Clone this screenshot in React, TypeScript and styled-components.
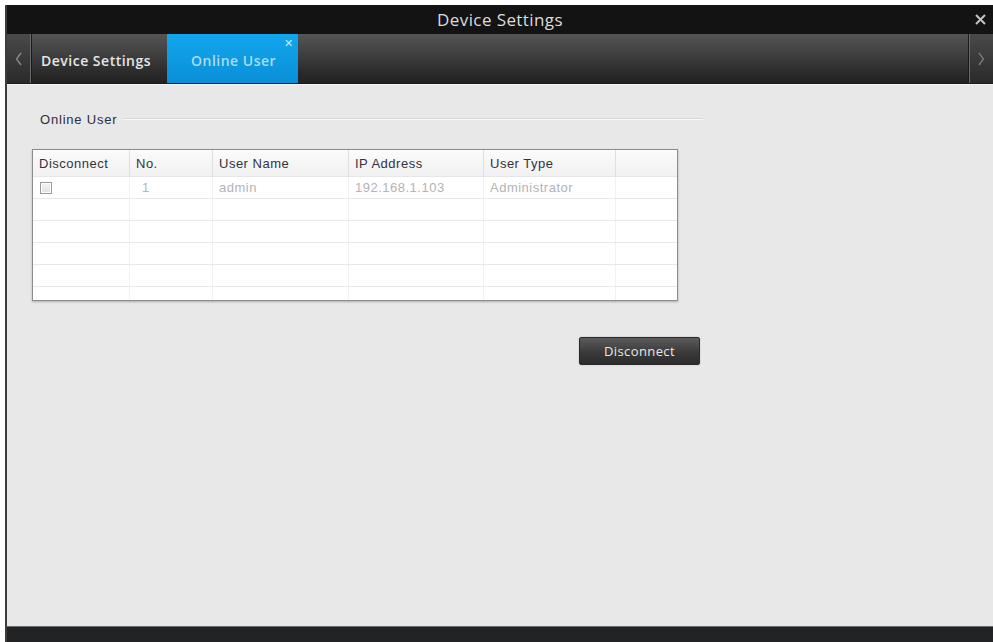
import React from "react";
import styled, { createGlobalStyle } from "styled-components";

const Global = createGlobalStyle`
  html, body { margin: 0; padding: 0; background: #ffffff; }
  body { font-family: "Open Sans", "Liberation Sans", sans-serif; }
  * { box-sizing: border-box; }
`;

const Page = styled.div`
  width: 993px;
  height: 642px;
  padding: 5px 0 0 5px;
  overflow: hidden;
`;

const Window = styled.div`
  height: 637px;
  display: flex;
  flex-direction: column;
  border-left: 2px solid #3c3c3c;
  background: #e8e8e8;
`;

const TitleBar = styled.div`
  height: 29px;
  flex: none;
  background: #131313;
  display: grid;
  grid-template-columns: 1fr auto 1fr;
  align-items: center;
`;

const Title = styled.div`
  grid-column: 2;
  color: #dcdcdc;
  font-size: 17px;
  letter-spacing: 0.4px;
`;

const CloseBtn = styled.div`
  grid-column: 3;
  justify-self: end;
  width: 26px;
  display: flex;
  justify-content: center;
  align-items: center;
  height: 29px;
`;

const TabBar = styled.div`
  height: 50px;
  flex: none;
  display: flex;
  background: linear-gradient(#555555 0%, #404040 40%, #2a2a2a 80%, #222222 100%);
  border-bottom: 1px solid #1a1a1a;
`;

const ArrowCell = styled.div<{ $side: "left" | "right" }>`
  width: 24px;
  flex: none;
  display: flex;
  align-items: center;
  justify-content: center;
  background: linear-gradient(#4a4a4a, #2a2a2a);
  ${(p) =>
    p.$side === "left"
      ? "border-right: 1px solid #6a6a6a; box-shadow: 1px 0 0 #1a1a1a;"
      : "border-left: 1px solid #6a6a6a; box-shadow: -1px 0 0 #1a1a1a;"}
`;

const Tabs = styled.div`
  flex: 1;
  display: flex;
`;

const Tab = styled.div<{ $active?: boolean }>`
  position: relative;
  display: flex;
  align-items: center;
  padding: 4px 0 0 ${(p) => (p.$active ? "24px" : "10px")};
  width: ${(p) => (p.$active ? "131px" : "136px")};
  font-size: 14px;
  font-weight: 600;
  letter-spacing: 0.5px;
  white-space: nowrap;
  color: ${(p) => (p.$active ? "#a9dcf7" : "#e6e6e6")};
  background: ${(p) =>
    p.$active ? "linear-gradient(#12a6ec, #0a8fd8)" : "transparent"};
`;

const TabClose = styled.span`
  position: absolute;
  top: 3px;
  right: 5px;
  font-size: 11px;
  line-height: 1;
  letter-spacing: 0;
  color: #c8ecff;
  font-weight: 400;
`;

const Content = styled.div`
  flex: 1;
  padding: 26px 0 0 25px;
  display: flex;
  flex-direction: column;
  border-top: 1px solid #f5f5f5;
`;

const Group = styled.div`
  width: 671px;
  display: flex;
  flex-direction: column;
`;

const GroupHead = styled.div`
  display: flex;
  align-items: center;
  gap: 6px;
  height: 16px;
  padding-left: 8px;
`;

const GroupLabel = styled.span`
  font-family: "Liberation Sans", Arial, sans-serif;
  font-size: 13px;
  color: #2f2f3a;
  letter-spacing: 0.8px;
`;

const GroupLine = styled.div`
  flex: 1;
  height: 2px;
  border-top: 1px solid #d6d6d6;
  border-bottom: 1px solid #fbfbfb;
`;

const TableBox = styled.div`
  margin-top: 22px;
  width: 646px;
  border: 1px solid #8c8c8c;
  box-shadow: 0 1px 2px rgba(0, 0, 0, 0.25);
  background: #ffffff;
`;

const Row = styled.div<{ $head?: boolean }>`
  display: grid;
  grid-template-columns: 97px 83px 136px 135px 132px 1fr;
  height: ${(p) => (p.$head ? "27px" : "22px")};
  background: ${(p) => (p.$head ? "linear-gradient(#fbfbfb, #f1f1f1)" : "#ffffff")};
  border-bottom: 1px solid ${(p) => (p.$head ? "#e6e6e6" : "#e8e8e8")};
`;

const Body = styled.div`
  height: 123px;
  overflow: hidden;
`;

const Cell = styled.div<{ $head?: boolean }>`
  display: flex;
  align-items: center;
  padding-left: 6px;
  font-family: "Liberation Sans", Arial, sans-serif;
  font-size: 13px;
  letter-spacing: ${(p) => (p.$head ? "0.5px" : "0.5px")};
  color: ${(p) => (p.$head ? "#33323f" : "#b4b4b4")};
  border-right: 1px solid ${(p) => (p.$head ? "#dedede" : "#f2f2f2")};
  white-space: nowrap;
  overflow: hidden;
  &:last-child { border-right: none; }
`;

const NoCell = styled(Cell)`
  padding-left: 12px;
`;

const Check = styled.span`
  width: 12px;
  height: 12px;
  margin-left: 1px;
  border: 1px solid #9a9a9a;
  background: linear-gradient(#f4f4f4, #e2e2e2);
  box-shadow: inset 0 0 0 1px #ffffff;
`;

const Actions = styled.div`
  display: flex;
  justify-content: flex-end;
  padding: 36px 3px 0 0;
`;

const Button = styled.button`
  width: 121px;
  height: 28px;
  border: 1px solid #2a2a2a;
  border-radius: 2px;
  background: linear-gradient(#5c5c5c, #3a3a3a 55%, #2c2c2c);
  color: #e8e8e8;
  font-family: "Open Sans", "Liberation Sans", sans-serif;
  font-size: 13px;
  letter-spacing: 0.4px;
  padding: 0;
  box-shadow: 0 0 2px rgba(0, 0, 0, 0.2);
`;

const Footer = styled.div`
  height: 16px;
  flex: none;
  background: #212324;
  border-top: 1px solid #6b6b6b;
`;

const users = [
  { no: "1", name: "admin", ip: "192.168.1.103", type: "Administrator" },
];

export default function App() {
  const emptyRows = 5;
  return (
    <Page>
      <Global />
      <Window>
        <TitleBar>
          <Title>Device Settings</Title>
          <CloseBtn>
            <svg width="11" height="11" viewBox="0 0 11 11">
              <path d="M1 1 L10 10 M10 1 L1 10" stroke="#c4c4c4" strokeWidth="2" />
            </svg>
          </CloseBtn>
        </TitleBar>
        <TabBar>
          <ArrowCell $side="left">
            <svg width="7" height="14" viewBox="0 0 7 14">
              <path d="M6 1 L1.5 7 L6 13" stroke="#8a8a8a" strokeWidth="1.4" fill="none" />
            </svg>
          </ArrowCell>
          <Tabs>
            <Tab>Device Settings</Tab>
            <Tab $active>
              Online User
              <TabClose>✕</TabClose>
            </Tab>
          </Tabs>
          <ArrowCell $side="right">
            <svg width="7" height="14" viewBox="0 0 7 14">
              <path d="M1 1 L5.5 7 L1 13" stroke="#7a7a7a" strokeWidth="1.4" fill="none" />
            </svg>
          </ArrowCell>
        </TabBar>
        <Content>
          <Group>
            <GroupHead>
              <GroupLabel>Online User</GroupLabel>
              <GroupLine />
            </GroupHead>
            <TableBox>
              <Row $head>
                <Cell $head>Disconnect</Cell>
                <Cell $head>No.</Cell>
                <Cell $head>User Name</Cell>
                <Cell $head>IP Address</Cell>
                <Cell $head>User Type</Cell>
                <Cell $head />
              </Row>
              <Body>
                {users.map((u) => (
                  <Row key={u.no}>
                    <Cell>
                      <Check />
                    </Cell>
                    <NoCell>{u.no}</NoCell>
                    <Cell>{u.name}</Cell>
                    <Cell>{u.ip}</Cell>
                    <Cell>{u.type}</Cell>
                    <Cell />
                  </Row>
                ))}
                {Array.from({ length: emptyRows }).map((_, i) => (
                  <Row key={`e${i}`}>
                    <Cell />
                    <Cell />
                    <Cell />
                    <Cell />
                    <Cell />
                    <Cell />
                  </Row>
                ))}
              </Body>
            </TableBox>
            <Actions>
              <Button>Disconnect</Button>
            </Actions>
          </Group>
        </Content>
        <Footer />
      </Window>
    </Page>
  );
}
